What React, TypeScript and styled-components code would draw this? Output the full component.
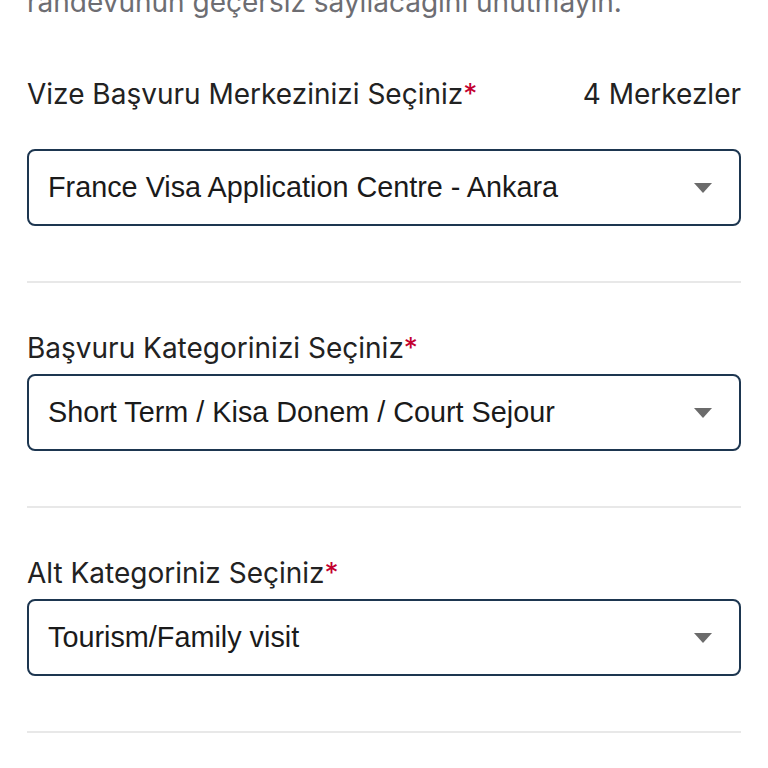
import React from "react";
import styled, { createGlobalStyle } from "styled-components";

const GlobalStyle = createGlobalStyle`
  html, body {
    margin: 0;
    padding: 0;
    background: #ffffff;
  }
  body {
    font-family: Inter, "Liberation Sans", sans-serif;
    color: #222222;
    overflow: hidden;
  }
`;

const Page = styled.div`
  padding: 0 27px;
  height: 768px;
  overflow: hidden;
`;

// the page is scrolled: only the last line of the notice peeks in at the top
const Notice = styled.p`
  margin: -13px 0 0;
  font-size: 28px;
  line-height: 30px;
  color: #6d6d72;
`;

const Section = styled.section<{ $first?: boolean }>`
  padding-top: ${(p) => (p.$first ? "62px" : "50px")};
`;

const LabelRow = styled.div<{ $first?: boolean }>`
  display: flex;
  justify-content: space-between;
  align-items: center;
  margin-bottom: ${(p) => (p.$first ? "40px" : "11px")};
`;

const Label = styled.label`
  font-size: 28px;
  line-height: 30px;
  color: #222222;
`;

const Required = styled.span`
  color: #c3002f;
`;

const Count = styled.span`
  font-size: 28px;
  line-height: 30px;
  color: #222222;
`;

const SelectBox = styled.div`
  height: 77px;
  box-sizing: border-box;
  border: 2px solid #1d3650;
  border-radius: 8px;
  display: flex;
  align-items: center;
  justify-content: space-between;
  padding: 0 27px 0 19px;
`;

const SelectValue = styled.span`
  font-family: "Liberation Sans", Arial, sans-serif;
  font-size: 28.8px;
  color: #1a1a1a;
`;

const Caret = styled.span`
  width: 0;
  height: 0;
  border-left: 9px solid transparent;
  border-right: 9px solid transparent;
  border-top: 10px solid #6b6b6b;
`;

const Divider = styled.hr`
  margin: 55px 0 0;
  border: 0;
  border-top: 2px solid #e8e8e8;
`;

type Field = {
  label: string;
  value: string;
  count?: string;
};

const fields: Field[] = [
  {
    label: "Vize Başvuru Merkezinizi Seçiniz",
    value: "France Visa Application Centre - Ankara",
    count: "4 Merkezler",
  },
  { label: "Başvuru Kategorinizi Seçiniz", value: "Short Term / Kisa Donem / Court Sejour" },
  { label: "Alt Kategoriniz Seçiniz", value: "Tourism/Family visit" },
];

export default function App() {
  return (
    <>
      <GlobalStyle />
      <Page>
        <Notice>randevunun geçersiz sayılacağını unutmayın.</Notice>
        {fields.map((f, i) => (
          <Section key={f.label} $first={i === 0}>
            <LabelRow $first={i === 0}>
              <Label>
                {f.label}
                <Required>*</Required>
              </Label>
              {f.count && <Count>{f.count}</Count>}
            </LabelRow>
            <SelectBox>
              <SelectValue>{f.value}</SelectValue>
              <Caret />
            </SelectBox>
            <Divider />
          </Section>
        ))}
      </Page>
    </>
  );
}
